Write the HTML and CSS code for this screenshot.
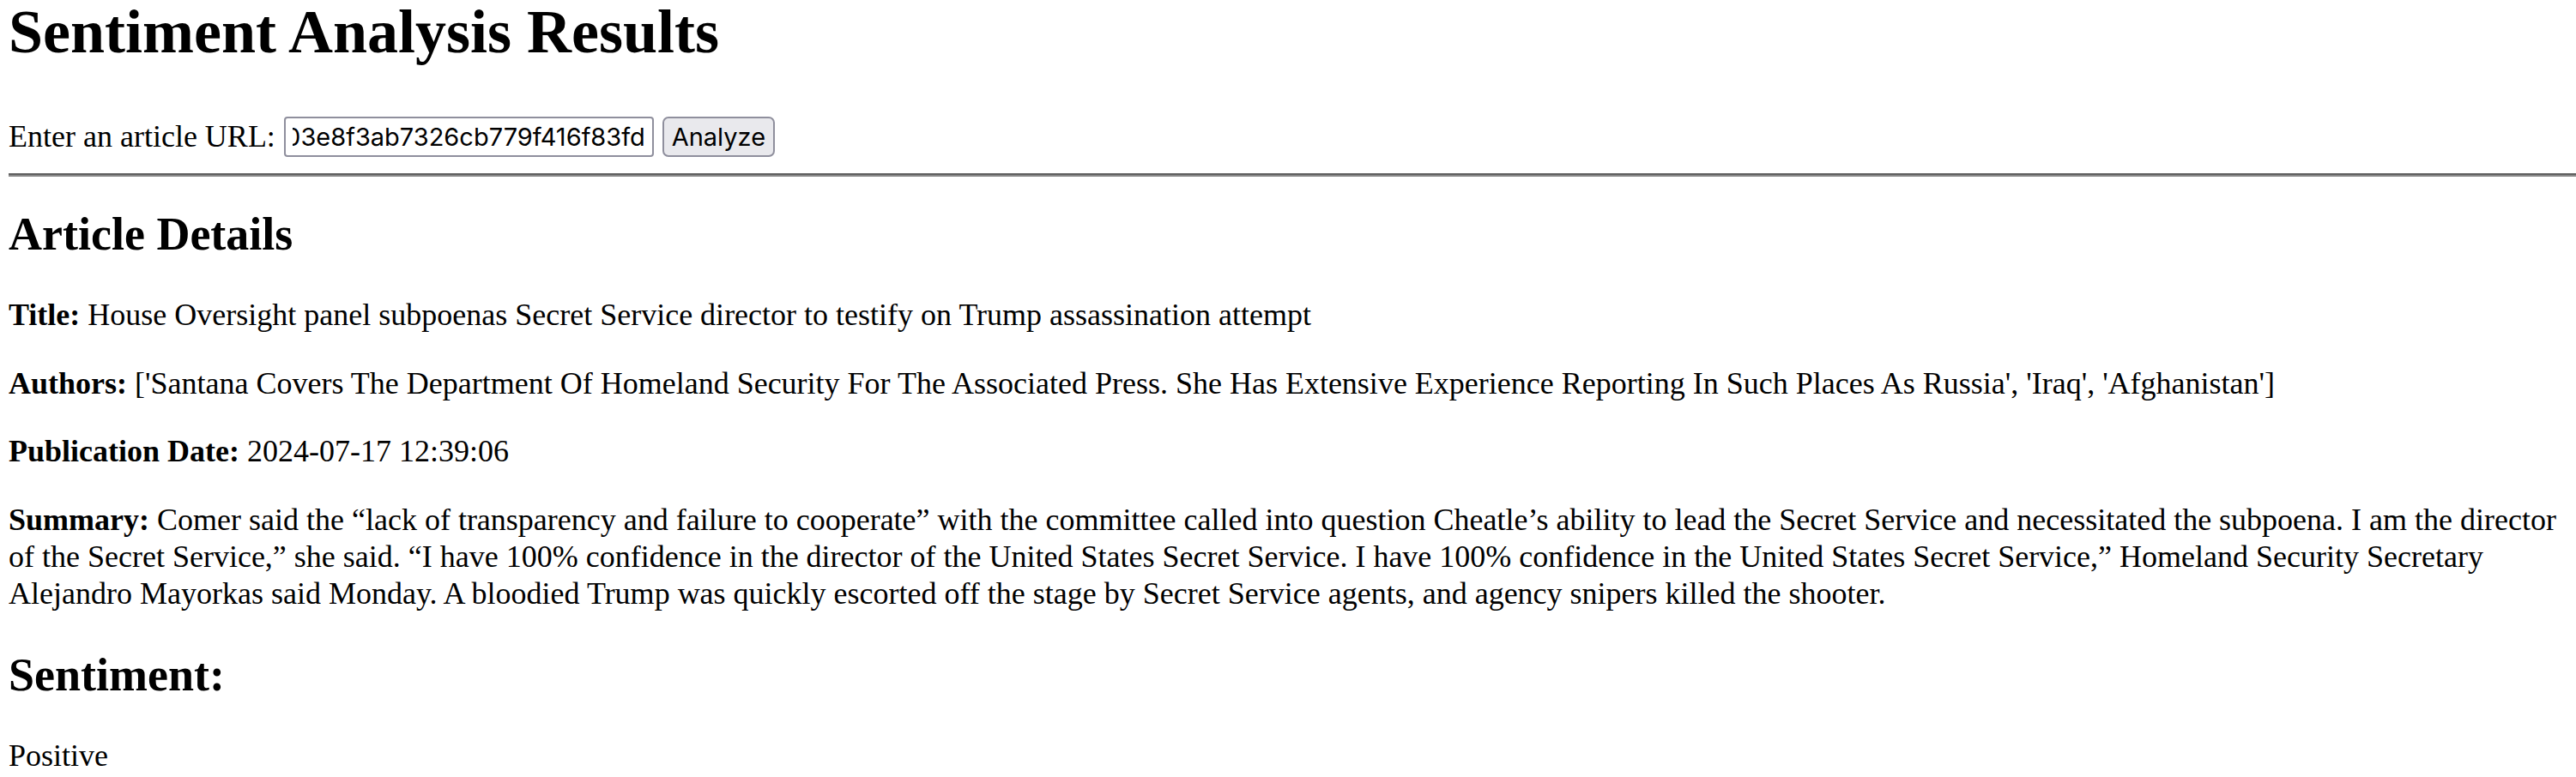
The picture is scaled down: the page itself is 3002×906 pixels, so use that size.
FILE: index.html
```html
<!DOCTYPE html>
<html lang="en">
<head>
<meta charset="utf-8">
<title>Sentiment Analysis Results</title>
<link rel="stylesheet" href="styles.css">
</head>
<body>
<h1 class="page-title">Sentiment Analysis Results</h1>
<form class="url-form">
  <label class="url-label" for="url">Enter an article URL:</label>
  <input class="url-input" id="url" type="text" value="https://apnews.com/article/secret-service-trump-shooting-cheatle-subpoena-comer-5c1a0d03e8f3ab7326cb779f416f83fd">
  <button class="analyze-btn" type="button">Analyze</button>
</form>
<hr class="divider">
<h2 class="section-title section-title--first">Article Details</h2>
<p class="field"><strong>Title:</strong> House Oversight panel subpoenas Secret Service director to testify on Trump assassination attempt</p>
<p class="field"><strong>Authors:</strong> ['Santana Covers The Department Of Homeland Security For The Associated Press. She Has Extensive Experience Reporting In Such Places As Russia', 'Iraq', 'Afghanistan']</p>
<p class="field"><strong>Publication Date:</strong> 2024-07-17 12:39:06</p>
<p class="field"><strong>Summary:</strong> Comer said the “lack of transparency and failure to cooperate” with the committee called into question Cheatle’s ability to lead the Secret Service and necessitated the subpoena. I am the director of the Secret Service,” she said. “I have 100% confidence in the director of the United States Secret Service. I have 100% confidence in the United States Secret Service,” Homeland Security Secretary Alejandro Mayorkas said Monday. A bloodied Trump was quickly escorted off the stage by Secret Service agents, and agency snipers killed the shooter.</p>
<h2 class="section-title">Sentiment:</h2>
<p class="field field--last">Positive</p>
</body>
</html>
```
FILE: styles.css
```css
html {
  background: #fff;
}

body {
  margin: 0 0 0 10px;
  font-family: "Liberation Serif", "Times New Roman", serif;
  font-size: 36px;
  line-height: 43px;
  color: #000;
  background: #fff;
}

.page-title {
  font-size: 72px;
  line-height: 86px;
  font-weight: bold;
  margin: -6px 0 56px;
}

.url-form {
  display: flex;
  align-items: center;
  gap: 10px;
  height: 47px;
  margin: 0;
}

.url-label {
  line-height: 43px;
}

.url-input {
  box-sizing: border-box;
  width: 431px;
  height: 47px;
  margin: 0;
  padding: 0 8px;
  border: 2px solid #8f8f9d;
  border-radius: 4px;
  background: #fff;
  color: #000;
  font-family: Inter, "Liberation Sans", Arial, sans-serif;
  font-size: 29px;
  direction: rtl;
  text-align: left;
  outline: none;
}

.analyze-btn {
  box-sizing: border-box;
  width: 131px;
  height: 47px;
  margin: 0;
  padding: 0;
  border: 2px solid #8f8f9d;
  border-radius: 7px;
  background: #e9e9ed;
  color: #000;
  font-family: Inter, "Liberation Sans", Arial, sans-serif;
  font-size: 29px;
}

.divider {
  height: 0;
  margin: 19px 0 0;
  border: none;
  border-top: 2px solid #5f5f5f;
  border-bottom: 2px solid #888;
}

.section-title {
  font-size: 54px;
  line-height: 64px;
  font-weight: bold;
  margin: 41px 0 41px;
}

.section-title--first {
  margin-top: 35px;
}

.field {
  margin: 36.5px 0;
}

.field--last {
  margin-bottom: 0;
}
```
